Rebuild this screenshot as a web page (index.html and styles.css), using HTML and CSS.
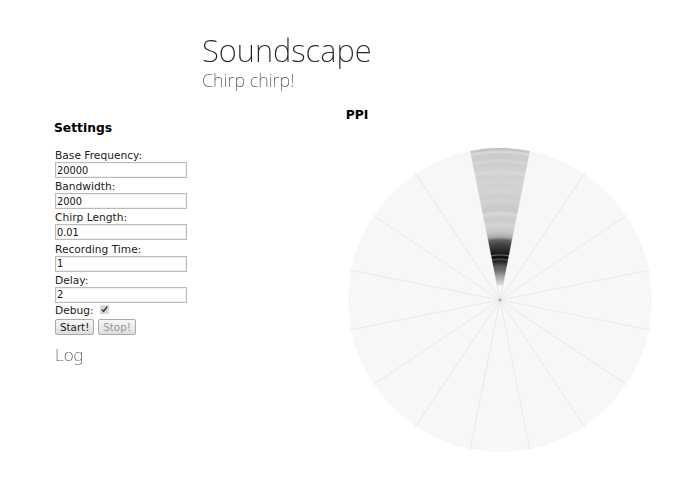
FILE: index.html
```html
<!DOCTYPE html>
<html lang="en">
<head>
<meta charset="utf-8">
<title>Soundscape</title>
<link rel="stylesheet" href="styles.css">
</head>
<body>
<header class="masthead">
  <h1 class="title">Soundscape</h1>
  <p class="subtitle">Chirp chirp!</p>
</header>
<h3 class="ppi-title">PPI</h3>
<main class="content">
  <section class="settings">
    <h3 class="settings-title">Settings</h3>
    <form class="settings-form">
      <label class="field"><span>Base Frequency:</span><input class="text-input" type="text" value="20000"></label>
      <label class="field"><span>Bandwidth:</span><input class="text-input" type="text" value="2000"></label>
      <label class="field"><span>Chirp Length:</span><input class="text-input" type="text" value="0.01"></label>
      <label class="field"><span>Recording Time:</span><input class="text-input" type="text" value="1"></label>
      <label class="field"><span>Delay:</span><input class="text-input" type="text" value="2"></label>
      <label class="check-field"><span>Debug:</span><input class="check" type="checkbox" checked></label>
      <div class="actions">
        <button class="btn" type="button">Start!</button>
        <button class="btn" type="button" disabled>Stop!</button>
      </div>
    </form>
    <h2 class="log-title">Log</h2>
  </section>
  <svg class="ppi" width="304" height="304" viewBox="-152 -152 304 304" role="img" aria-label="PPI plot">
    <defs>
      <pattern id="grain" width="2" height="2" patternUnits="userSpaceOnUse">
        <rect width="2" height="2" fill="#f9f9f9"/>
        <rect width="1" height="1" fill="#f5f5f5"/>
        <rect x="1" y="1" width="1" height="1" fill="#f5f5f5"/>
      </pattern>
      <radialGradient id="echo" gradientUnits="userSpaceOnUse" cx="0" cy="0" r="152">
        <stop offset="0.098" stop-color="#d8d8d8"/>
        <stop offset="0.125" stop-color="#c4c4c4"/>
        <stop offset="0.158" stop-color="#a0a0a0"/>
        <stop offset="0.190" stop-color="#747474"/>
        <stop offset="0.224" stop-color="#5a5a5a"/>
        <stop offset="0.243" stop-color="#383838"/>
        <stop offset="0.257" stop-color="#202020"/>
        <stop offset="0.270" stop-color="#505050"/>
        <stop offset="0.276" stop-color="#111111"/>
        <stop offset="0.289" stop-color="#111111"/>
        <stop offset="0.296" stop-color="#6a6a6a"/>
        <stop offset="0.303" stop-color="#1a1a1a"/>
        <stop offset="0.329" stop-color="#2a2a2a"/>
        <stop offset="0.362" stop-color="#404040"/>
        <stop offset="0.395" stop-color="#606060"/>
        <stop offset="0.414" stop-color="#a8a8a8"/>
        <stop offset="0.447" stop-color="#c6c6c6"/>
        <stop offset="0.480" stop-color="#cecece"/>
        <stop offset="0.500" stop-color="#d6d6d6"/>
        <stop offset="0.520" stop-color="#cccccc"/>
        <stop offset="0.546" stop-color="#cecece"/>
        <stop offset="0.572" stop-color="#d8d8d8"/>
        <stop offset="0.592" stop-color="#c8c8c8"/>
        <stop offset="0.618" stop-color="#cccccc"/>
        <stop offset="0.651" stop-color="#d2d2d2"/>
        <stop offset="0.684" stop-color="#cecece"/>
        <stop offset="0.717" stop-color="#d4d4d4"/>
        <stop offset="0.750" stop-color="#d0d0d0"/>
        <stop offset="0.783" stop-color="#d4d4d4"/>
        <stop offset="0.816" stop-color="#d0d0d0"/>
        <stop offset="0.842" stop-color="#d8d8d8"/>
        <stop offset="0.862" stop-color="#d0d0d0"/>
        <stop offset="0.895" stop-color="#cecece"/>
        <stop offset="0.914" stop-color="#d6d6d6"/>
        <stop offset="0.934" stop-color="#cccccc"/>
        <stop offset="0.960" stop-color="#cccccc"/>
        <stop offset="0.974" stop-color="#dadada"/>
        <stop offset="0.987" stop-color="#c8c8c8"/>
        <stop offset="1" stop-color="#bcbcbc"/>
      </radialGradient>
    </defs>
    <circle r="152" fill="url(#grain)"/>
    <g class="spokes">
      <line x2="29.7" y2="149.1"/><line x2="84.4" y2="126.4"/><line x2="126.4" y2="84.4"/><line x2="149.1" y2="29.7"/>
      <line x2="149.1" y2="-29.7"/><line x2="126.4" y2="-84.4"/><line x2="84.4" y2="-126.4"/><line x2="29.7" y2="-149.1"/>
      <line x2="-29.7" y2="149.1"/><line x2="-84.4" y2="126.4"/><line x2="-126.4" y2="84.4"/><line x2="-149.1" y2="29.7"/>
      <line x2="-149.1" y2="-29.7"/><line x2="-126.4" y2="-84.4"/><line x2="-84.4" y2="-126.4"/><line x2="-29.7" y2="-149.1"/>
    </g>
    <path d="M-2.93 -14.71 L-29.65 -149.08 A152 152 0 0 1 29.65 -149.08 L2.93 -14.71 A15 15 0 0 0 -2.93 -14.71 Z" fill="url(#echo)"/>
    <circle r="1.5" fill="#aaa"/>
  </svg>
</main>
</body>
</html>
```
FILE: styles.css
```css
html, body {
  margin: 0;
  padding: 0;
  background: #fff;
}

body {
  width: 695px;
  height: 494px;
  overflow: hidden;
  font-family: "DejaVu Sans", sans-serif;
  font-size: 10.67px;
  color: #222;
}

.masthead {
  padding: 31px 0 0 202px;
  will-change: transform;
}

.title {
  margin: 0;
  font-family: "Noto Sans", sans-serif;
  font-size: 31px;
  line-height: 38px;
  font-weight: 200;
  color: #222;
}

.subtitle {
  margin: 1px 0 0;
  font-family: "Noto Sans", sans-serif;
  font-size: 18px;
  line-height: 21px;
  font-weight: 200;
  color: #555;
}

.ppi-title {
  margin: 16px 43px 0 62px;
  font-size: 12.3px;
  line-height: 16px;
  font-weight: 700;
  color: #000;
  text-align: center;
}

.content {
  display: flex;
  justify-content: space-between;
  margin: 0 43px 0 54px;
}

.settings {
  width: 134px;
}

.settings-title {
  margin: -2px 0 13px;
  font-size: 12.3px;
  line-height: 15px;
  font-weight: 700;
  color: #000;
}

.settings-form {
  display: flex;
  flex-direction: column;
}

.field {
  display: flex;
  flex-direction: column;
  height: 31.2px;
  padding-left: 1px;
}

.field span {
  line-height: 14px;
}

.text-input {
  box-sizing: border-box;
  width: 132px;
  height: 16px;
  margin: -1px 0 0;
  padding: 1px;
  border: 1px solid #bbb;
  box-shadow: inset 0 0 0 1px #f2f2f2;
  background: #fff;
  font-family: "DejaVu Sans", sans-serif;
  font-size: 9.8px;
  color: #111;
  outline: none;
}

.check-field {
  display: flex;
  align-items: center;
  gap: 6px;
  height: 14px;
  margin-top: -1px;
  padding-left: 1px;
}

.check {
  width: 9px;
  height: 9px;
  margin: 0 0 3px;
  accent-color: #d8d8d8;
}

.actions {
  display: flex;
  gap: 4px;
  margin-top: 1px;
  padding-left: 1px;
}

.btn {
  box-sizing: border-box;
  height: 16px;
  padding: 0 4px;
  border: 1px solid #aaa;
  border-radius: 2px;
  background: linear-gradient(#f6f6f6, #dedede);
  font-family: "DejaVu Sans", sans-serif;
  font-size: 10.3px;
  line-height: 14px;
  color: #222;
}

.btn:disabled {
  color: #999;
}

.log-title {
  margin: 10px 0 0 1px;
  font-family: "Noto Sans", sans-serif;
  font-size: 17px;
  line-height: 20px;
  font-weight: 200;
  color: #555;
  will-change: transform;
}

.ppi {
  display: block;
  margin-top: 25px;
}

.spokes line {
  stroke: #e8e8e8;
  stroke-width: 1;
}
```
